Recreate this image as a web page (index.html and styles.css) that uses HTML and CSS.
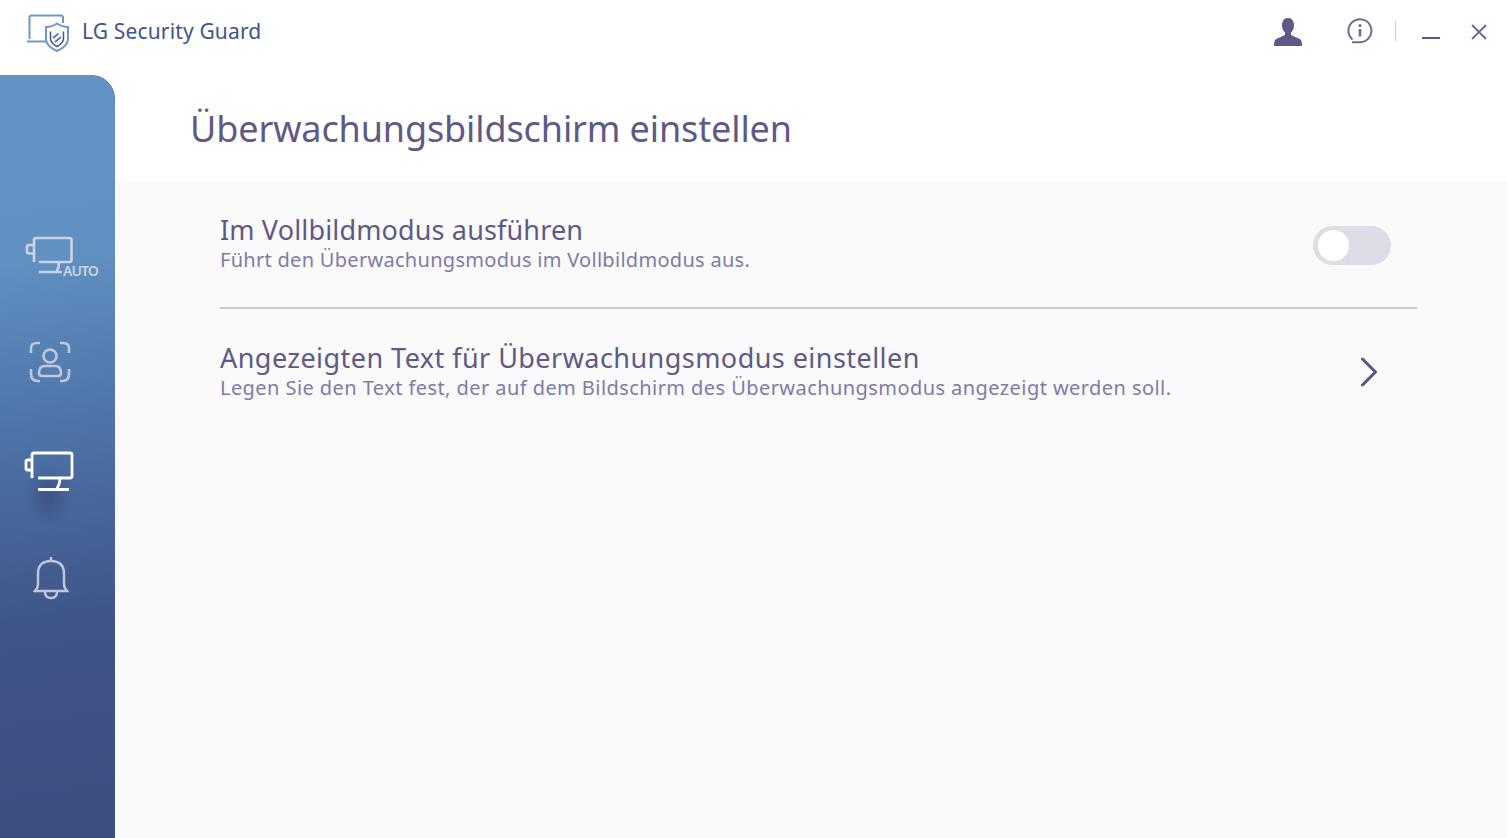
FILE: index.html
```html
<!DOCTYPE html>
<html lang="de">
<head>
<meta charset="utf-8">
<title>LG Security Guard</title>
<link rel="stylesheet" href="styles.css">
</head>
<body>
<div class="app">
  <header class="topbar">
    <div class="brand">
      <svg class="logo" width="44" height="40" viewBox="0 0 44 40" fill="none">
        <path d="M3.500 27V5.500Q3.500 3.500 5.500 3.500H35Q37 3.500 37 5.500V11" stroke="#7097c6" stroke-width="2"/>
        <path d="M1 29.500H20" stroke="#7097c6" stroke-width="2"/>
        <path d="M31 11.500Q36 15 42 15V27Q42 34 31 39Q20 34 20 27V15Q26 15 31 11.500Z" fill="#fff" stroke="#7097c6" stroke-width="2"/>
        <path d="M24.500 19.500V26.500Q24.500 31 31 34.500Q37.500 31 37.500 26.500V19.500" stroke="#3f5488" stroke-width="1.500"/>
        <path d="M27 26L32.500 21.500M29 30L35 25" stroke="#5a76a8" stroke-width="1.800"/>
      </svg>
      <span class="brand-name">LG Security Guard</span>
    </div>
    <div class="controls">
      <svg class="c-user" width="30" height="30" viewBox="0 0 30 30">
        <path d="M15 2C10.800 2 9 5.500 9 9.500C9 12.500 10.300 15 12 16.500V18.500C12 20 5.500 21 2.500 23.500C1.500 24.500 1 26 1 30H29C29 26 28.500 24.500 27.500 23.500C24.500 21 18 20 18 18.500V16.500C19.700 15 21 12.500 21 9.500C21 5.500 19.200 2 15 2Z" fill="#5f5988"/>
      </svg>
      <svg class="c-info" width="26" height="26" viewBox="0 0 26 26" fill="none">
        <path d="M5 24.200H13A11.500 11.500 0 1 0 5.500 21.500" stroke="#6f6a98" stroke-width="2"/>
        <circle cx="13" cy="7.500" r="1.500" fill="#6f6a98"/>
        <path d="M13 11V18.500" stroke="#6f6a98" stroke-width="2.600"/>
      </svg>
      <span class="c-sep"></span>
      <svg class="c-min" width="20" height="20" viewBox="0 0 20 20"><path d="M1 16H19" stroke="#5b5484" stroke-width="2"/></svg>
      <svg class="c-close" width="18" height="18" viewBox="0 0 18 18"><path d="M2 2L16 16M16 2L2 16" stroke="#6f6a98" stroke-width="2"/></svg>
    </div>
  </header>
  <div class="body">
    <nav class="sidebar">
      <div class="nav-item nav-auto">
        <svg width="74" height="44" viewBox="0 0 74 44" fill="none" stroke="#cdd2e2" stroke-width="2.600">
          <path d="M8 10H3.500Q2 10 2 11.500V17Q2 18.500 3.500 18.500H8"/>
          <path d="M9 27V5Q9 3 11 3H44.500Q46.500 3 46.500 5V25Q46.500 27 44.500 27H14"/>
          <path d="M34 27Q34 31 32 36.500M14 37H37"/>
          <text x="38" y="41" class="auto-label">AUTO</text>
        </svg>
      </div>
      <div class="nav-item nav-face">
        <svg width="44" height="44" viewBox="0 0 44 44" fill="none" stroke="#c0c7db" stroke-width="2.600">
          <path d="M3 13V8Q3 3 9 3H12M32 3H35Q41 3 41 8V13M3 29V34Q3 41 10 41H12M41 29V34Q41 41 34 41H32"/>
          <circle cx="22" cy="16" r="6.500"/>
          <path d="M11 33Q11 26 17 26H27Q33 26 33 33Q33 36 30 36H14Q11 36 11 33Z"/>
        </svg>
      </div>
      <div class="nav-item nav-active">
        <svg width="50" height="42" viewBox="0 0 50 42" fill="none" stroke="#fff" stroke-width="2.800">
          <path d="M8 9H3.500Q2 9 2 10.500V17.500Q2 19 3.500 19H8"/>
          <path d="M8 27V4Q8 2 10 2H46Q48 2 48 4V25Q48 27 46 27H14"/>
          <path d="M36 27Q36 33 33 38M14 38.500H45"/>
        </svg>
      </div>
      <div class="nav-item nav-bell">
        <svg width="36" height="46" viewBox="0 0 36 46" fill="none" stroke="#c0c7db" stroke-width="2.400">
          <path d="M18 1V5"/>
          <path d="M2 35Q5 32 5 28V18Q5 5 18 5Q31 5 31 18V28Q31 32 34 35Z"/>
          <path d="M12 36Q12 42 18 42Q24 42 24 36"/>
        </svg>
      </div>
    </nav>
    <main class="main">
      <h1 class="page-title">Überwachungsbildschirm einstellen</h1>
      <section class="panel">
        <div class="row row-first">
          <div class="row-text">
            <div class="row-title">Im Vollbildmodus ausführen</div>
            <div class="row-desc">Führt den Überwachungsmodus im Vollbildmodus aus.</div>
          </div>
          <div class="toggle"><span class="knob"></span></div>
        </div>
        <div class="row row-second">
          <div class="row-text">
            <div class="row-title">Angezeigten Text für Überwachungsmodus einstellen</div>
            <div class="row-desc">Legen Sie den Text fest, der auf dem Bildschirm des Überwachungsmodus angezeigt werden soll.</div>
          </div>
          <svg class="chevron" width="18" height="30" viewBox="0 0 18 30" fill="none"><path d="M2.500 2L15.500 15L2.500 28" stroke="#5b5484" stroke-width="3" stroke-linecap="round" stroke-linejoin="round"/></svg>
        </div>
      </section>
    </main>
  </div>
</div>
</body>
</html>
```

FILE: styles.css
```css
* { box-sizing: border-box; }
html, body { margin: 0; height: 100%; overflow: hidden; }
body { background: #fff; font-family: "Noto Sans", "Open Sans", sans-serif; }
.app { height: 838px; display: flex; flex-direction: column; }
.topbar { height: 75px; flex: none; display: flex; align-items: flex-start; justify-content: space-between; padding: 12px 19px 0 26px; }
.brand { display: flex; align-items: center; gap: 12px; }
.logo { display: block; }
.brand-name { font-size: 21px; color: #3f5488; letter-spacing: 0.15px; margin-top: -3px; }
.controls { display: flex; align-items: center; height: 40px; }
.c-user { margin-right: 44px; margin-top: -2px; }
.c-info { margin-right: 22px; margin-top: -2px; }
.c-sep { width: 1px; height: 20px; background: #c9c7da; margin-right: 25px; margin-top: -2px; }
.c-min { margin-right: 29px; }
.c-close { margin-top: -1px; }
.body { flex: 1; display: flex; min-height: 0; }
.sidebar { width: 115px; flex: none; border-top-right-radius: 24px; background: radial-gradient(circle 24px at 0 100%, transparent 23px, #3f5488 24px) top right / 24px 24px no-repeat, linear-gradient(172deg, #6492c5 0%, #6190c3 24%, #4d74a8 46%, #3f5488 72%, #3c4e80 100%); display: flex; flex-direction: column; align-items: flex-start; padding: 160px 0 0 25px; }
.nav-item { display: flex; }
.nav-auto svg, .nav-face svg, .nav-active svg, .nav-bell svg { display: block; }
.nav-face { margin-top: 61px; margin-left: 3px; }
.nav-active { margin-top: 67px; position: relative; margin-left: -1px; }
.nav-active::after { content: ""; position: absolute; left: 0; right: 0; bottom: -32px; height: 60px; border-radius: 50%; background: radial-gradient(closest-side, rgba(48,62,112,.5), rgba(48,62,112,0)); }
.nav-active svg { position: relative; z-index: 1; }
.nav-bell { margin-top: 63px; margin-left: 8px; }
.auto-label { font-family: "Noto Sans", sans-serif; font-size: 14px; font-weight: 600; fill: #cdd2e2; stroke: none; letter-spacing: -0.9px; }
.main { flex: 1; min-width: 0; display: flex; flex-direction: column; }
.page-title { margin: 0; height: 106px; flex: none; padding: 28px 0 0 75px; font-size: 36px; font-weight: 400; line-height: 52px; color: #5f5988; letter-spacing: -0.12px; }
.panel { flex: 1; background: #fafafa; padding: 0 90px 0 105px; }
.row { display: flex; align-items: center; justify-content: space-between; }
.row-first { height: 128px; border-bottom: 2px solid #c9c9dc; padding: 2px 26px 0 0; }
.row-first .row-text { margin-bottom: 3px; }
.row-second { padding: 33px 39px 0 0; }
.row-text { display: flex; flex-direction: column; }
.row-title { font-size: 27px; line-height: 32px; color: #5f5988; letter-spacing: 0.15px; margin-bottom: 1px; }
.row-desc { font-size: 20px; line-height: 26px; color: #7f7ba8; letter-spacing: 0.29px; }
.row-second .row-title { letter-spacing: 0.45px; }
.row-second .row-desc { letter-spacing: 0.43px; }
.toggle { width: 78px; height: 39px; border-radius: 20px; background: #dddde8; padding: 4px 5px; }
.knob { display: block; width: 31px; height: 31px; border-radius: 50%; background: #fff; }
.chevron { display: block; }
```
